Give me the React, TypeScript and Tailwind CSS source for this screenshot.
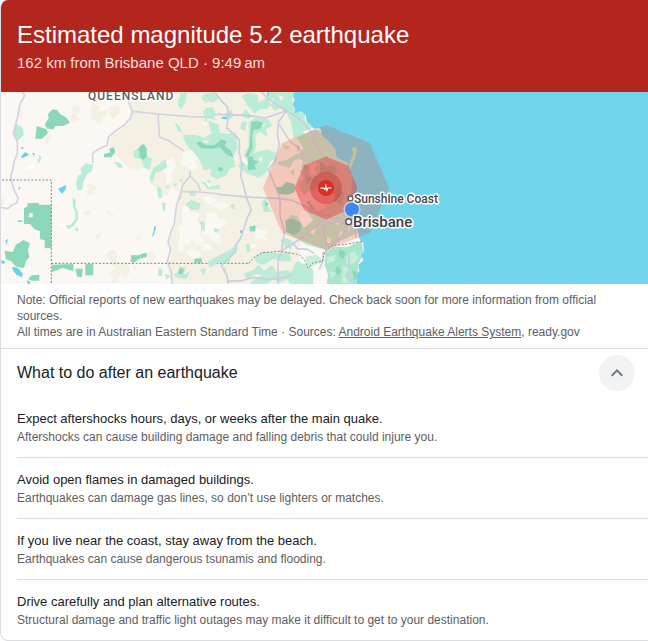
import { useState } from "react";

const tips = [
  {
    title: "Expect aftershocks hours, days, or weeks after the main quake.",
    text: "Aftershocks can cause building damage and falling debris that could injure you.",
  },
  {
    title: "Avoid open flames in damaged buildings.",
    text: "Earthquakes can damage gas lines, so don’t use lighters or matches.",
  },
  {
    title: "If you live near the coast, stay away from the beach.",
    text: "Earthquakes can cause dangerous tsunamis and flooding.",
  },
  {
    title: "Drive carefully and plan alternative routes.",
    text: "Structural damage and traffic light outages may make it difficult to get to your destination.",
  },
];

/* Western half of the map: outback, lakes and state borders. */
function WestMap() {
  return (
    <g transform="translate(0 88) scale(0.33333)">
      <path
        fill="#f4f0e3"
        d="M372 0 L400 70 L385 108 L335 145 L325 180 L305 190 L345 178 L352 205 L385 240 L420 246 L432 232 L452 262 L448 285 L470 300 L478 325 L505 322 L512 300 L545 318 L530 350 L525 420 L503 462 L512 500 L500 530 L515 600 L900 600 L900 0 Z"
      />
      <g fill="#f4f0e3">
        <path d="M213 60 L232 48 L240 66 L228 82 L240 92 L222 106 L210 92 L218 76 Z M275 52 L295 50 L300 70 L318 66 L322 82 L308 90 L298 110 L284 96 L270 92 Z M58 60 L68 74 L64 92 L54 90 Z M325 58 L355 52 L362 70 L340 92 L326 84 Z M135 150 L155 140 L148 158 L138 168 Z" />
        <path d="M260 290 L280 286 L290 300 L275 320 L258 322 L266 306 Z M250 372 L272 368 L270 382 L252 382 Z M322 366 L342 380 L338 386 L320 374 Z M285 444 L300 432 L308 438 L294 456 Z M0 330 L12 332 L14 348 L0 352 Z" />
        <path d="M318 498 L336 484 L352 492 L350 520 L366 530 L384 526 L392 548 L378 572 L360 560 L352 584 L332 588 L340 562 L328 556 L344 540 L330 518 Z M408 450 L420 438 L424 452 L412 462 Z M432 500 L452 490 L470 508 L456 520 L440 512 Z M392 528 L412 534 L406 550 Z M130 470 L142 486 L134 490 Z" />
      </g>
      {/* pale clearings in the farmland */}
      <g fill="#fbf8f3">
        <path d="M545 360 L560 345 L572 372 L600 376 L590 396 L566 392 L572 420 L600 428 L596 452 L576 446 L566 470 L548 462 L552 492 L534 486 L540 440 L530 420 L548 402 Z" />
        <path d="M606 330 L630 322 L650 336 L640 350 L618 346 Z M612 400 L640 392 L660 400 L650 430 L664 450 L640 462 L626 440 L608 442 Z M600 470 L626 466 L640 484 L610 490 Z M530 540 L550 530 L548 548 Z" />
        <path d="M494 220 L520 210 L528 236 L510 262 L520 276 L498 290 L500 262 L488 246 Z" />
      </g>
      <g fill="#ffffff">
        <path d="M78 238 L100 230 L108 236 L96 244 L80 244 Z M174 406 L196 408 L196 418 L180 414 Z" />
      </g>
      <g fill="#bbecd7">
        <path d="M48 106 L68 120 L72 140 L54 158 L46 154 L38 136 Z M118 200 L124 208 L120 222 L112 226 Z" />
        <path d="M242 240 L258 226 L280 230 L276 250 L262 258 L252 276 L246 306 L232 306 L228 284 L234 262 L244 258 Z M218 326 L228 336 L226 358 L234 370 L234 396 L222 414 L206 424 L196 412 L212 410 L226 392 L226 372 L218 354 Z M222 424 L234 418 L234 432 Z" />
        <path d="M342 222 L360 224 L370 238 L356 240 Z M400 190 L418 180 L440 180 L440 204 L456 212 L450 244 L432 240 L424 214 L402 208 Z M448 270 L460 240 L476 230 L496 212 L502 236 L486 248 L466 256 L456 288 Z M470 296 L484 300 L486 330 L476 330 Z M486 344 L496 344 L496 370 L488 366 Z M494 296 L508 292 L506 302 Z" />
        <path d="M524 102 L536 112 L548 134 L534 128 Z M536 30 L552 24 L556 44 L542 64 L534 50 Z M610 20 L640 8 L660 28 L640 44 L626 40 Z M616 60 L640 58 L636 80 L650 96 L628 92 L612 80 Z" />
        <path d="M548 148 L590 142 L620 152 L660 138 L660 240 L640 250 L620 230 L604 218 L590 186 L560 172 Z M610 92 L626 100 L632 130 L660 140 L656 110 Z M606 282 L630 276 L636 294 L660 290 L660 304 L624 304 Z" />
        <path d="M566 310 L590 308 L584 324 L572 324 Z M534 324 L546 322 L542 336 Z M556 350 L576 344 L602 346 L594 366 L572 364 Z M596 400 L606 402 L612 420 L604 432 Z M640 424 L660 422 L654 432 Z M538 276 L546 272 L548 286 Z M520 288 L530 286 L528 298 Z" />
        <path d="M476 538 L488 546 L486 564 L474 564 Z M494 556 L510 564 L500 576 Z M536 532 L556 540 L552 560 L570 550 L560 572 L536 570 L520 560 L540 548 Z M600 544 L618 540 L612 564 Z" />
      </g>
      <g fill="#8cd6b9">
        <path d="M146 76 L158 64 L172 66 L180 78 L198 88 L210 104 L190 114 L166 114 L160 124 L142 122 L134 110 L146 90 L144 80 Z M110 114 L140 124 L144 136 L126 152 L106 152 Z" />
        <path d="M312 198 L330 194 L328 182 L342 178 L346 192 L334 208 L312 208 Z M422 172 L432 168 L440 182 L440 206 L430 216 L418 206 L420 192 L414 186 Z" />
        <path d="M82 346 L116 344 L118 350 L154 350 L154 480 L134 480 L134 456 L120 454 L120 430 L104 424 L90 408 L72 408 L72 360 L82 356 Z" />
        <path d="M48 470 L70 456 L90 466 L84 486 L88 508 L78 518 L72 540 L48 536 L34 520 L18 514 L14 488 L38 492 Z M84 572 L96 562 L118 560 L118 578 L94 578 Z" />
        <path d="M156 530 L220 528 L220 550 L188 540 L156 552 Z M226 542 L248 542 L246 568 L232 566 Z M256 528 L280 528 L280 562 L256 562 Z M394 502 L416 502 L434 494 L442 498 L438 508 L418 512 L402 524 L392 522 Z M584 512 L604 510 L606 526 L584 524 Z" />
        <path d="M592 166 L612 172 L640 170 L660 164 L660 184 L620 184 L596 180 Z M538 540 L552 544 L546 560 L534 556 Z" />
      </g>
      <path fill="#fbf8f3" d="M88 376 L98 374 L98 388 L86 388 Z" />
      <g fill="#6ad3ec">
        <path d="M62 208 L76 192 L88 200 L68 210 Z M96 194 L104 196 L102 206 Z M60 180 L70 176 L70 184 Z M174 302 L200 290 L196 306 L186 318 Z M54 300 L62 296 L58 306 Z M36 536 L54 540 L68 556 L66 568 L50 560 L40 550 Z M16 458 L24 452 L20 472 Z M4 516 L14 520 L14 528 L4 526 Z M80 578 L90 580 L90 590 L82 586 Z M456 448 L464 412 L468 416 L462 440 Z M54 396 L66 398 L66 402 L54 402 Z" />
      </g>
      <g fill="none" stroke="#d2d4e4" strokeWidth="5" strokeLinejoin="round">
        <path d="M62 0 L74 24 L62 44 L56 66 L52 90 L46 112 L40 136 L52 160 L52 196 L42 222 L38 246 L32 268 L40 300 L54 330 L50 346 L34 352 L24 362 L0 358" />
        <path d="M372 8 L397 70 L392 90 L372 112 L350 126 L326 146 L322 172 L298 182 L278 196 L278 226" />
        <path d="M397 70 L474 78 L570 86 L630 88 L660 76 M474 78 L478 146 L510 160 L540 182 L556 192 L566 216 L572 240 L570 264 L594 288 L602 310 M570 264 L548 292 L544 310 L530 350 L522 410 L510 440 L504 462 L512 484 L502 520 L514 552 L518 600 M544 310 L600 312 L660 318" />
      </g>
      <g fill="none" stroke="#858585" strokeWidth="3" strokeDasharray="6 5">
        <path d="M6 276 H154 V590 M154 526 H746" />
      </g>
    </g>
  );
}

/* Eastern half of the map: ranges, highways and the coast. */
function EastMap() {
  return (
    <g transform="translate(180 88) scale(0.33333)">
      <g fill="#fbf8f3">
        <path d="M10 190 L40 186 L60 204 L44 222 L56 240 L34 250 L20 236 L4 232 Z M70 276 L96 288 L88 300 Z M60 100 L80 106 L78 118 Z M96 348 L130 342 L150 352 L120 366 Z M80 372 L110 376 L118 396 L136 390 L138 412 L116 422 L108 440 L90 424 L70 430 L76 400 Z M10 400 L44 392 L66 412 L60 440 L76 460 L50 472 L32 452 L16 468 L0 460 L0 426 Z M14 490 L44 482 L66 500 L40 514 Z M220 420 L262 428 L252 446 L266 456 L230 452 Z M206 470 L232 466 L222 482 Z M100 460 L124 450 L120 470 Z" />
      </g>
      <g fill="#bbecd7">
        <path d="M0 16 L20 12 L18 36 L4 46 Z M68 20 L84 38 L82 46 L66 34 Z M70 70 L96 58 L110 80 L84 88 L76 104 Z M136 78 L156 64 L160 86 L142 100 Z" />
        <path d="M10 140 L50 142 L74 150 L100 130 L140 138 L168 134 L172 180 L160 206 L166 236 L150 240 L140 262 L110 274 L90 262 L96 244 L70 246 L62 220 L44 196 L24 176 Z" />
        <path d="M186 102 L200 100 L196 130 L180 120 Z M206 104 L224 90 L266 94 L276 114 L258 124 L262 146 L240 132 L226 140 L228 170 L222 196 L240 190 L262 184 L292 196 L290 212 L270 220 L262 250 L236 270 L222 264 L196 254 L174 234 L184 218 L204 222 L192 200 L206 172 Z" />
        <path d="M186 24 L204 14 L232 20 L236 44 L258 30 L262 12 L345 12 L336 40 L346 64 L376 80 L374 96 L400 118 L380 128 L352 130 L330 96 L318 72 L300 60 L284 68 L270 52 L262 62 L240 64 L224 76 L202 52 Z M196 64 L216 84 L206 94 L184 84 Z" />
        <path d="M330 80 L372 100 L366 124 L384 150 L376 168 L360 152 L340 150 L336 118 Z M244 344 L258 330 L262 350 L276 372 L252 372 Z M210 420 L230 412 L226 432 L208 432 Z M198 470 L208 466 L210 492 L200 490 Z M152 352 L164 348 L164 364 L156 362 Z M16 348 L34 336 L62 346 L58 362 L32 366 Z M62 398 L74 402 L74 432 L64 420 Z M102 420 L116 424 L112 434 L102 432 Z" />
        <path d="M84 520 L120 500 L150 486 L172 468 L170 494 L150 506 L150 524 L112 526 L88 540 Z M222 510 L250 490 L300 496 L330 494 L334 520 L300 520 L282 512 L250 530 L230 524 Z M128 542 L138 534 L134 560 Z M192 556 L220 546 L236 530 L252 548 L276 532 L290 552 L320 546 L342 556 L360 540 L378 548 L380 590 L330 590 L322 574 L298 584 L280 574 L262 588 L210 588 L224 572 L250 560 L230 558 L200 572 Z" />
        <path d="M300 456 L320 450 L340 462 L332 484 L316 476 Z M330 560 L350 520 L380 530 L400 546 L400 590 L350 590 Z" />
      </g>
      <g fill="#f4f0e3">
        <path d="M264 36 L282 30 L276 48 Z M292 20 L312 26 L304 40 Z M240 112 L256 104 L252 118 Z M66 160 L90 156 L80 166 Z M236 212 L250 202 L244 224 Z" />
      </g>
      <path fill="#fbf8f3" d="M188 206 L204 224 L200 232 L184 216 Z" />
      <g fill="#8cd6b9">
        <path d="M50 166 L60 160 L78 172 L104 172 L124 154 L140 160 L134 174 L154 190 L160 208 L140 200 L120 178 L96 182 L62 180 Z M214 102 L232 98 L250 106 L240 124 L222 124 L216 144 L218 180 L204 208 L196 204 L208 180 Z M204 206 L216 204 L222 216 L236 222 L222 232 L230 244 L204 246 Z M118 236 L130 240 L126 252 L112 246 Z M208 416 L226 412 L224 430 L210 426 Z M256 338 L266 348 L256 356 Z M44 512 L66 516 L62 526 L42 524 Z" />
      </g>
      {/* olive and green country beneath the shaking zone */}
      <g fill="#bde6cb">
        <path d="M350 150 L404 124 L440 140 L470 190 L504 220 L520 260 L526 360 L540 432 L480 460 L440 486 L380 470 L330 440 L318 412 L330 380 L350 384 L372 420 L400 396 L380 370 L400 340 L440 350 L470 330 L440 290 L410 300 L370 320 L356 290 L372 270 L358 250 L376 226 L352 206 L370 180 Z" />
        <path d="M290 222 L320 216 L352 196 L366 210 L340 218 L330 240 L300 232 Z M306 170 L330 176 L320 186 Z M330 250 L344 244 L340 266 Z" />
      </g>
      <g fill="#8cd6b9">
        <path d="M286 298 L306 296 L318 282 L344 288 L344 312 L324 320 L296 318 Z M316 396 L340 392 L362 404 L364 426 L344 440 L318 432 Z M350 170 L360 176 L354 194 Z M372 226 L384 240 L372 262 L396 270 L380 290 Z M420 220 L440 236 L462 230 L474 252 L452 262 L432 252 L420 262 Z M380 340 L404 336 L420 356 L396 366 Z M468 300 L492 316 L484 350 L462 340 Z" />
      </g>
      <g fill="#f4f0e3">
        <path d="M390 226 L412 222 L404 246 L416 264 L392 262 Z M396 320 L430 340 L440 360 L410 368 L390 346 Z M442 444 L454 454 L450 470 L438 462 Z M482 428 L490 432 L484 448 L476 444 Z M350 336 L372 350 L366 372 L350 366 Z M504 410 L512 420 L504 430 Z M384 430 L408 420 L400 440 Z M466 404 L478 398 L474 414 Z" />
      </g>
      <path
        fill="#a9e6cd"
        d="M436 490 L460 476 L500 478 L545 458 L552 500 L536 524 L534 560 L536 590 L440 590 L444 560 L434 530 Z"
      />
      <g fill="#c6efdb">
        <path d="M440 508 L468 500 L462 520 L442 526 Z M500 500 L524 490 L536 510 L514 530 L498 524 Z M488 530 L508 544 L494 560 L508 584 L486 586 Z M448 548 L468 556 L454 572 Z M376 506 L410 500 L430 520 L404 532 L384 540 Z" />
      </g>
      <path
        fill="#8cd6b9"
        d="M478 484 L498 492 L490 512 L476 504 Z M472 534 L484 550 L474 562 L464 548 Z M516 548 L532 552 L524 578 Z"
      />
      <g fill="none" stroke="#cccfe2" strokeWidth="5" strokeLinejoin="round">
        <path d="M104 12 L124 38 L142 56 L146 80 L140 120 L166 142 L178 156 L178 196 L186 230 L182 262 L190 290 L200 330 L214 366 L202 388 L194 416 L182 450 L168 470 L164 494 L150 508 L124 532 L140 560 L146 590" />
        <path d="M114 79 L200 82 L256 90 L284 80 L320 68 M120 320 L216 328 L302 332 L340 338 L372 354 L420 376 L452 388 L500 396" />
        <path d="M244 12 L262 30 L290 50 L320 68 L296 100 L292 140 L298 170 L286 216 L266 246 L280 280 L300 330 L300 384 L314 430 L304 488 L294 520 L294 588" />
        <path d="M320 68 L362 96 L396 134 L402 162 L420 190 L436 214 L472 236 L492 276 L500 330 L512 380 M298 110 L330 160 L362 186 L374 214 L366 236 L384 262 M304 488 L340 466 L372 446 L392 426 L430 400 L452 406 L476 400 L504 410 M424 376 L426 400 L434 440 L440 470 L474 462 L512 400 L530 450 M140 580 L186 578 L220 568 L262 574 L300 572 L340 560 M340 466 L352 482 L384 484 L402 496 M430 490 L428 520 L418 544 M506 496 L508 540 L516 588" />
        <path d="M114 317 L122 320" />
      </g>
      <path fill="#62cfeb" d="M122 92 L130 86 L140 86 L140 94 Z M180 428 L186 426 L186 434 L180 434 Z M262 8 L268 18 L264 24 Z" />
      <path
        fill="none"
        stroke="#858585"
        strokeWidth="3"
        strokeDasharray="6 5"
        d="M206 526 L222 508 L246 494 L300 490 L336 496 L358 500 L376 520 L384 540 L400 524 L428 520 L434 490 L458 472 L492 470 L546 460"
      />
      {/* Coral Sea */}
      <path
        fill="#70d5ea"
        d="M343 0 L340 24 L344 36 L338 48 L346 62 L344 76 L362 70 L378 82 L380 100 L392 112 L402 122 L420 120 L428 144 L446 160 L466 184 L470 208 L490 218 L504 226 L506 248 L516 262 L518 290 L512 320 L518 350 L514 380 L520 404 L534 430 L538 452 L550 466 L552 490 L544 502 L550 516 L536 530 L538 550 L528 562 L534 600 L1410 600 L1410 0 Z"
      />
      <path fill="#c5e3b8" d="M516 180 L530 178 L530 192 L524 212 L514 236 L508 246 L508 228 L514 212 L520 198 Z" />
    </g>
  );
}

function QuakeMap() {
  return (
    <svg
      className="block h-[192px] w-full"
      viewBox="1 92 647 192"
      preserveAspectRatio="xMinYMid slice"
      role="img"
      aria-label="Map of the estimated shaking area near Brisbane"
    >
      <rect x="0" y="92" width="648" height="192" fill="#fbf8f3" />
      <WestMap />
      <EastMap />
      <path fill="#ea4335" fillOpacity="0.23" d="M326 125 L370 143 L389 188 L370 233 L326 250 L282 233 L263 188 L282 143 Z" />
      <path fill="#e8323a" fillOpacity="0.44" d="M326 156.500 L348 165.500 L357.500 188 L348 210 L326 219.500 L304 210 L294.500 188 L304 165.500 Z" />
      <circle cx="326" cy="188" r="16" fill="#c5352b" fillOpacity="0.42" />
      <circle cx="326" cy="188" r="8" fill="#d93025" />
      <path
        fill="#ffffff"
        d="M320.500 187.600 H323.600 L324.600 188.600 L325.900 183.300 L327 188.200 L327.600 187.400 H331.500 V188.600 H328.300 L326.800 192.300 L325.800 188.400 L325.200 190.400 L323.200 188.700 H320.500 Z"
      />
      <g fill="#ffffff" stroke="#55585c" strokeWidth="1.400">
        <circle cx="350.500" cy="198.500" r="2.400" />
        <circle cx="348.700" cy="221.700" r="2.900" />
      </g>
      <circle cx="352" cy="209.500" r="8.500" fill="#c9d3dc" />
      <circle cx="352" cy="209.500" r="7" fill="#4285f4" />
      <g
        fontFamily="Roboto, 'Liberation Sans', sans-serif"
        stroke="#ffffff"
        strokeWidth="3"
        strokeLinejoin="round"
        paintOrder="stroke"
        fontWeight="500"
      >
        <text x="88" y="100" fontSize="12" letterSpacing="1" fill="#5c5f66">
          QUEENSLAND
        </text>
        <text x="354" y="203" fontSize="12" fill="#45484d">
          Sunshine Coast
        </text>
        <text x="353" y="227" fontSize="15" fill="#3c4043">
          Brisbane
        </text>
      </g>
    </svg>
  );
}

export default function App() {
  const [open, setOpen] = useState(true);

  return (
    <main className="overflow-hidden rounded-l-lg border-b border-l border-[#dadce0] bg-white font-['Arial','Liberation_Sans',sans-serif] text-[#202124]">
      <header className="bg-[#b3261e] px-4 pt-5 pb-4 text-white">
        <h1 className="text-[24px] leading-[30px]">Estimated magnitude 5.2 earthquake</h1>
        <p className="text-[15px] leading-[26px] text-[#f9dedc]">162 km from Brisbane QLD · 9:49{"\u202f"}am</p>
      </header>

      <QuakeMap />

      <div className="border-b border-[#dadce0] px-4 py-2 text-[12px] leading-4 text-[#5e5e5e]">
        <p>
          Note: Official reports of new earthquakes may be delayed. Check back soon for more information from official
          sources.
        </p>
        <p>
          All times are in Australian Eastern Standard Time · Sources:{" "}
          <a href="#sources" className="underline">
            Android Earthquake Alerts System
          </a>
          , ready.gov
        </p>
      </div>

      <section>
        <div className="flex h-12 items-center justify-between pr-[13px] pl-4">
          <h2 className="text-[16px] leading-6">What to do after an earthquake</h2>
          <button
            type="button"
            aria-label="Toggle safety tips"
            aria-expanded={open}
            onClick={() => setOpen(!open)}
            className="flex size-9 items-center justify-center rounded-full bg-[#f1f3f4] text-[#70757a]"
          >
            <svg viewBox="0 0 24 24" className="size-6" fill="currentColor" aria-hidden="true">
              <path d="M12 8l-6 6 1.410 1.410L12 10.830l4.590 4.580L18 14z" />
            </svg>
          </button>
        </div>
        {open && (
          <ul className="divide-y divide-[#dadce0] pl-4">
            {tips.map((tip) => (
              <li key={tip.title} className="py-3 pr-4">
                <h3 className="text-[13px] leading-5">{tip.title}</h3>
                <p className="text-[12px] leading-4 text-[#5e5e5e]">{tip.text}</p>
              </li>
            ))}
          </ul>
        )}
      </section>
    </main>
  );
}
